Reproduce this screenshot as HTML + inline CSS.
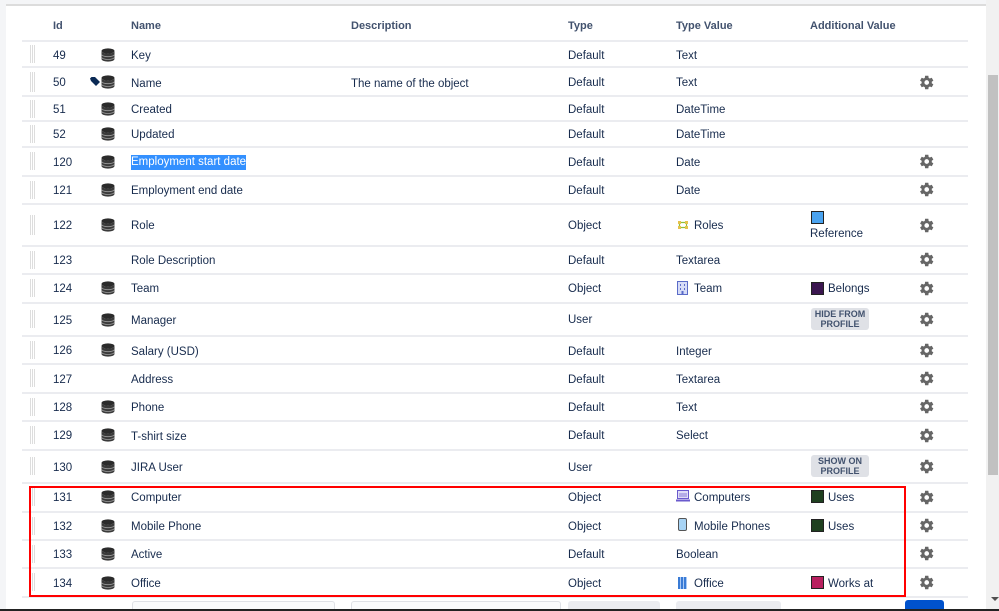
<!DOCTYPE html>
<html><head><meta charset="utf-8">
<style>
*{margin:0;padding:0;box-sizing:border-box}
body{width:999px;height:611px;overflow:hidden;background:#fff;font-family:"Liberation Sans",sans-serif;font-size:11.5px;color:#172b4d;position:relative}
.a{position:absolute;white-space:nowrap;line-height:25px}
.hl{position:absolute;left:22px;width:946px;height:2px;background:#ebecf0}
.hd{font-weight:bold;color:#42526e;font-size:11px}
.drag{position:absolute;left:30px;width:6px;background-image:linear-gradient(90deg,#ddd 1px,transparent 1px),linear-gradient(#fff 1px,transparent 1px);background-size:2px 2px}
.sw{position:absolute;width:13px;height:13px;border:1px solid #222}
.lz{position:absolute;background:#dfe1e6;border-radius:3px;color:#42526e;font-weight:bold;font-size:9px;line-height:10px;text-align:center;width:58px;height:22px;padding-top:1px}
</style></head><body>
<div class="a" style="left:0;top:0;width:6px;height:611px;background:#f4f5f7"></div>
<div class="a" style="left:6px;top:0;width:980px;height:4px;background:#f4f5f7"></div>
<div class="a" style="left:6px;top:4px;width:980px;height:2px;background:#dcdcdc"></div>
<div class="a" style="left:986px;top:0;width:13px;height:611px;background:#f1f1f1"></div>
<div class="a" style="left:988px;top:75px;width:10px;height:400px;background:#c1c1c1"></div>
<div class="a" style="left:991px;top:597px;width:0;height:0;border-left:4px solid transparent;border-right:4px solid transparent;border-top:4px solid #505050"></div>

<div class="a hd" style="left:53px;top:14px">Id</div>
<div class="a hd" style="left:131px;top:14px">Name</div>
<div class="a hd" style="left:351px;top:14px">Description</div>
<div class="a hd" style="left:568px;top:14px">Type</div>
<div class="a hd" style="left:676px;top:14px">Type Value</div>
<div class="a hd" style="left:810px;top:14px">Additional Value</div>
<div class="hl" style="top:40px"></div>

<svg width="0" height="0" style="position:absolute"><defs>
<symbol id="db" viewBox="0 0 14 14"><ellipse cx="7" cy="3" rx="6.5" ry="2.6" fill="#2b2b2b"/><path d="M0.5 3v8c0 1.5 3 2.6 6.5 2.6s6.5-1.1 6.5-2.6V3c0 1.5-3 2.6-6.5 2.6S0.5 4.5 0.5 3z" fill="#3a3a3a"/><path d="M0.5 6.2c0 1.4 3 2.5 6.5 2.5s6.5-1.1 6.5-2.5M0.5 9c0 1.4 3 2.5 6.5 2.5s6.5-1.1 6.5-2.5" stroke="#999" stroke-width="0.8" fill="none"/></symbol>
<symbol id="gear" viewBox="0 0 24 24"><path fill="#666" d="M19.4 13a7.5 7.5 0 000-2l2.3-1.7-2.3-4-2.7 1.1a7.6 7.6 0 00-1.7-1L14.6 2.5h-4.6l-.4 2.9a7.6 7.6 0 00-1.7 1L5.2 5.3l-2.3 4L5.2 11a7.5 7.5 0 000 2l-2.3 1.7 2.3 4 2.7-1.1c.5.4 1.1.8 1.7 1l.4 2.9h4.6l.4-2.9c.6-.2 1.2-.6 1.7-1l2.7 1.1 2.3-4zM12.3 15.3a3.3 3.3 0 110-6.6 3.3 3.3 0 010 6.6z"/></symbol>
</defs></svg>

<div class="hl" style="top:66px"></div><div class="hl" style="top:95px"></div><div class="hl" style="top:120px"></div><div class="hl" style="top:146px"></div><div class="hl" style="top:175px"></div><div class="hl" style="top:203px"></div><div class="hl" style="top:245px"></div><div class="hl" style="top:273px"></div><div class="hl" style="top:302px"></div><div class="hl" style="top:335px"></div><div class="hl" style="top:363px"></div><div class="hl" style="top:392px"></div><div class="hl" style="top:420px"></div><div class="hl" style="top:449px"></div><div class="hl" style="top:482px"></div><div class="hl" style="top:511px"></div><div class="hl" style="top:539px"></div><div class="hl" style="top:567px"></div><div class="hl" style="top:596px"></div>

<div class="drag" style="top:45px;height:18px"></div><div class="drag" style="top:72px;height:20px"></div><div class="drag" style="top:100px;height:18px"></div><div class="drag" style="top:125px;height:18px"></div><div class="drag" style="top:152px;height:18px"></div><div class="drag" style="top:181px;height:18px"></div><div class="drag" style="top:215px;height:20px"></div><div class="drag" style="top:251px;height:18px"></div><div class="drag" style="top:279px;height:18px"></div><div class="drag" style="top:310px;height:18px"></div><div class="drag" style="top:341px;height:18px"></div><div class="drag" style="top:369px;height:18px"></div><div class="drag" style="top:398px;height:18px"></div><div class="drag" style="top:426px;height:18px"></div><div class="drag" style="top:457px;height:18px"></div><div class="drag" style="top:488px;height:18px"></div><div class="drag" style="top:517px;height:18px"></div><div class="drag" style="top:545px;height:18px"></div><div class="drag" style="top:573px;height:18px"></div>

<div class="a" style="left:53px;top:44px">49</div><div class="a" style="left:53px;top:71px">50</div><div class="a" style="left:53px;top:98px">51</div><div class="a" style="left:53px;top:123px">52</div><div class="a" style="left:53px;top:151px">120</div><div class="a" style="left:53px;top:179px">121</div><div class="a" style="left:53px;top:214px">122</div><div class="a" style="left:53px;top:249px">123</div><div class="a" style="left:53px;top:277px">124</div><div class="a" style="left:53px;top:309px">125</div><div class="a" style="left:53px;top:339px">126</div><div class="a" style="left:53px;top:368px">127</div><div class="a" style="left:53px;top:396px">128</div><div class="a" style="left:53px;top:424px">129</div><div class="a" style="left:53px;top:456px">130</div><div class="a" style="left:53px;top:486px">131</div><div class="a" style="left:53px;top:515px">132</div><div class="a" style="left:53px;top:543px">133</div><div class="a" style="left:53px;top:572px">134</div>

<svg class="a" style="left:101px;top:48px" width="14" height="14"><use href="#db"/></svg>
<svg class="a" style="left:101px;top:75px" width="14" height="14"><use href="#db"/></svg>
<svg class="a" style="left:90px;top:77px" width="10" height="9" viewBox="0 0 10 9"><path d="M0 1.5L1.5 0H5l5 5-4 4-5-5z" fill="#0b2a55"/></svg>
<svg class="a" style="left:101px;top:102px" width="14" height="14"><use href="#db"/></svg>
<svg class="a" style="left:101px;top:127px" width="14" height="14"><use href="#db"/></svg>
<svg class="a" style="left:101px;top:155px" width="14" height="14"><use href="#db"/></svg>
<svg class="a" style="left:101px;top:183px" width="14" height="14"><use href="#db"/></svg>
<svg class="a" style="left:101px;top:218px" width="14" height="14"><use href="#db"/></svg>
<svg class="a" style="left:101px;top:281px" width="14" height="14"><use href="#db"/></svg>
<svg class="a" style="left:101px;top:313px" width="14" height="14"><use href="#db"/></svg>
<svg class="a" style="left:101px;top:343px" width="14" height="14"><use href="#db"/></svg>
<svg class="a" style="left:101px;top:400px" width="14" height="14"><use href="#db"/></svg>
<svg class="a" style="left:101px;top:428px" width="14" height="14"><use href="#db"/></svg>
<svg class="a" style="left:101px;top:460px" width="14" height="14"><use href="#db"/></svg>
<svg class="a" style="left:101px;top:490px" width="14" height="14"><use href="#db"/></svg>
<svg class="a" style="left:101px;top:519px" width="14" height="14"><use href="#db"/></svg>
<svg class="a" style="left:101px;top:547px" width="14" height="14"><use href="#db"/></svg>
<svg class="a" style="left:101px;top:576px" width="14" height="14"><use href="#db"/></svg>

<div class="a" style="left:131px;top:44px">Key</div><div class="a" style="left:131px;top:72px">Name</div><div class="a" style="left:131px;top:98px">Created</div><div class="a" style="left:131px;top:123px">Updated</div>
<div class="a" style="left:131px;top:155px;background:#3390ff;color:#fff;line-height:15px">Employment start date</div>
<div class="a" style="left:131px;top:179px">Employment end date</div><div class="a" style="left:131px;top:214px">Role</div><div class="a" style="left:131px;top:249px">Role Description</div><div class="a" style="left:131px;top:277px">Team</div><div class="a" style="left:131px;top:309px">Manager</div><div class="a" style="left:131px;top:340px">Salary (USD)</div><div class="a" style="left:131px;top:368px">Address</div><div class="a" style="left:131px;top:396px">Phone</div><div class="a" style="left:131px;top:425px">T-shirt size</div><div class="a" style="left:131px;top:456px">JIRA User</div><div class="a" style="left:131px;top:486px">Computer</div><div class="a" style="left:131px;top:515px">Mobile Phone</div><div class="a" style="left:131px;top:543px">Active</div><div class="a" style="left:131px;top:572px">Office</div>
<div class="a" style="left:351px;top:72px">The name of the object</div>

<div class="a" style="left:568px;top:44px">Default</div><div class="a" style="left:568px;top:71px">Default</div><div class="a" style="left:568px;top:98px">Default</div><div class="a" style="left:568px;top:123px">Default</div><div class="a" style="left:568px;top:151px">Default</div><div class="a" style="left:568px;top:179px">Default</div><div class="a" style="left:568px;top:214px">Object</div><div class="a" style="left:568px;top:249px">Default</div><div class="a" style="left:568px;top:277px">Object</div><div class="a" style="left:568px;top:308px">User</div><div class="a" style="left:568px;top:340px">Default</div><div class="a" style="left:568px;top:368px">Default</div><div class="a" style="left:568px;top:396px">Default</div><div class="a" style="left:568px;top:424px">Default</div><div class="a" style="left:568px;top:456px">User</div><div class="a" style="left:568px;top:486px">Object</div><div class="a" style="left:568px;top:515px">Object</div><div class="a" style="left:568px;top:543px">Default</div><div class="a" style="left:568px;top:572px">Object</div>

<div class="a" style="left:676px;top:44px">Text</div><div class="a" style="left:676px;top:71px">Text</div><div class="a" style="left:676px;top:98px">DateTime</div><div class="a" style="left:676px;top:123px">DateTime</div><div class="a" style="left:676px;top:151px">Date</div><div class="a" style="left:676px;top:179px">Date</div>
<svg class="a" style="left:677px;top:220px" width="12" height="10" viewBox="0 0 12 10"><path d="M1 1h3v3H1zM8 1h3v3H8zM1 6h3v3H1zM8 6h3v3H8z" fill="#e6c24a"/><path d="M4 2.5h4M4 7.5h4M2.5 4v2M9.5 4v2" stroke="#8fbf3a" stroke-width="1.2"/></svg><div class="a" style="left:694px;top:214px">Roles</div>
<div class="a" style="left:676px;top:249px">Textarea</div>
<svg class="a" style="left:677px;top:281px" width="11" height="14" viewBox="0 0 11 14"><rect x="0.5" y="0.5" width="10" height="13" fill="#d6dcf7" stroke="#5a6bc8"/><path d="M3 3h1v2H3zM7 3h1v2H7zM3 7h1v2H3zM7 7h1v2H7zM4.5 10h2v4h-2z" fill="#5a6bc8"/></svg><div class="a" style="left:694px;top:277px">Team</div>
<div class="a" style="left:676px;top:340px">Integer</div><div class="a" style="left:676px;top:368px">Textarea</div><div class="a" style="left:676px;top:396px">Text</div><div class="a" style="left:676px;top:424px">Select</div>
<svg class="a" style="left:676px;top:490px" width="14" height="12" viewBox="0 0 14 12"><rect x="1.5" y="0.5" width="11" height="8" fill="#e0ddf7" stroke="#6a5acd"/><path d="M3 4h8M3 6h8" stroke="#6a5acd" stroke-width="0.8"/><rect x="0" y="9.5" width="14" height="2" fill="#6a5acd"/></svg><div class="a" style="left:694px;top:486px">Computers</div>
<div class="a" style="left:678px;top:518px;width:9px;height:13px;border:1.5px solid #555;border-radius:2px;background:#a8d4f5"></div><div class="a" style="left:694px;top:515px">Mobile Phones</div>
<div class="a" style="left:676px;top:543px">Boolean</div>
<div class="a" style="left:678px;top:577px;width:9px;height:12px;background:repeating-linear-gradient(90deg,#3a7bd5 0 2px,#a9c9f5 2px 3px)"></div><div class="a" style="left:694px;top:572px">Office</div>

<div class="sw" style="left:811px;top:211px;background:#4aa3f0"></div><div class="a" style="left:810px;top:222px">Reference</div>
<div class="sw" style="left:811px;top:282px;background:#3b1650"></div><div class="a" style="left:828px;top:277px">Belongs</div>
<div class="lz" style="left:811px;top:308px">HIDE FROM<br>PROFILE</div>
<div class="lz" style="left:811px;top:455px">SHOW ON<br>PROFILE</div>
<div class="sw" style="left:811px;top:490px;background:#1f4020"></div><div class="a" style="left:828px;top:486px">Uses</div>
<div class="sw" style="left:811px;top:519px;background:#1f4020"></div><div class="a" style="left:828px;top:515px">Uses</div>
<div class="sw" style="left:811px;top:576px;background:#b8205f"></div><div class="a" style="left:828px;top:572px">Works at</div>

<svg class="a" style="left:918px;top:74px" width="17" height="17"><use href="#gear"/></svg>
<svg class="a" style="left:918px;top:153px" width="17" height="17"><use href="#gear"/></svg>
<svg class="a" style="left:918px;top:181px" width="17" height="17"><use href="#gear"/></svg>
<svg class="a" style="left:918px;top:217px" width="17" height="17"><use href="#gear"/></svg>
<svg class="a" style="left:918px;top:251px" width="17" height="17"><use href="#gear"/></svg>
<svg class="a" style="left:918px;top:280px" width="17" height="17"><use href="#gear"/></svg>
<svg class="a" style="left:918px;top:311px" width="17" height="17"><use href="#gear"/></svg>
<svg class="a" style="left:918px;top:342px" width="17" height="17"><use href="#gear"/></svg>
<svg class="a" style="left:918px;top:370px" width="17" height="17"><use href="#gear"/></svg>
<svg class="a" style="left:918px;top:398px" width="17" height="17"><use href="#gear"/></svg>
<svg class="a" style="left:918px;top:427px" width="17" height="17"><use href="#gear"/></svg>
<svg class="a" style="left:918px;top:458px" width="17" height="17"><use href="#gear"/></svg>
<svg class="a" style="left:918px;top:489px" width="17" height="17"><use href="#gear"/></svg>
<svg class="a" style="left:918px;top:517px" width="17" height="17"><use href="#gear"/></svg>
<svg class="a" style="left:918px;top:545px" width="17" height="17"><use href="#gear"/></svg>
<svg class="a" style="left:918px;top:574px" width="17" height="17"><use href="#gear"/></svg>

<div class="a" style="left:29px;top:486px;width:877px;height:111px;border:2px solid #f00"></div>

<div class="a" style="left:132px;top:601px;width:203px;height:10px;border:1px solid #dfe1e6;border-bottom:none;border-radius:3px 3px 0 0;background:#fafbfc"></div>
<div class="a" style="left:351px;top:601px;width:210px;height:10px;border:1px solid #dfe1e6;border-bottom:none;border-radius:3px 3px 0 0;background:#fafbfc"></div>
<div class="a" style="left:568px;top:601px;width:92px;height:10px;border-radius:3px 3px 0 0;background:#ebecf0"></div>
<div class="a" style="left:676px;top:601px;width:105px;height:10px;border-radius:3px 3px 0 0;background:#ebecf0"></div>
<div class="a" style="left:905px;top:600px;width:39px;height:11px;border-radius:3px 3px 0 0;background:#0052cc"></div>
<div class="a" style="left:0;top:609px;width:999px;height:2px;background:#222"></div>
</body></html>
